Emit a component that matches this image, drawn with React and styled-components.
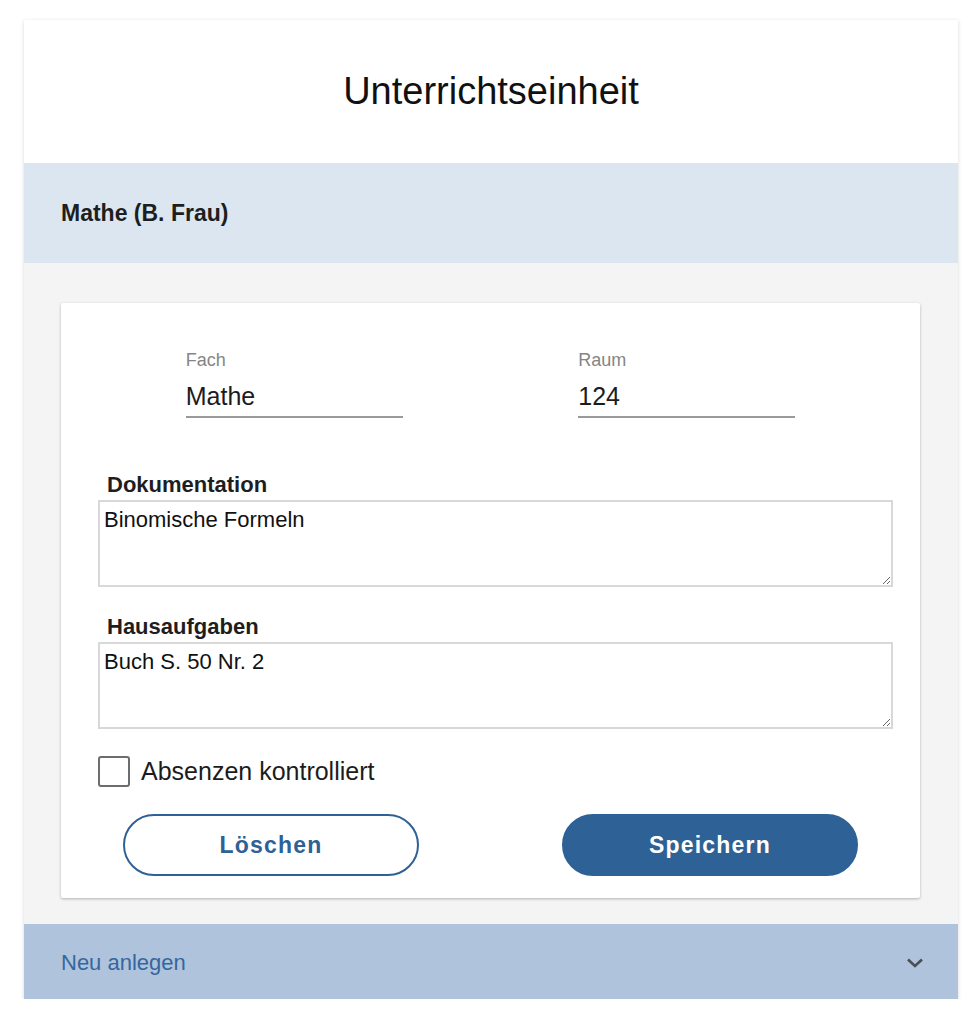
import React from "react";
import styled, { createGlobalStyle } from "styled-components";

const Global = createGlobalStyle`
  html, body { margin: 0; padding: 0; background: #ffffff; }
  body { font-family: "Liberation Sans", Arial, Helvetica, sans-serif; color: #1a1a1a; }
  * { box-sizing: border-box; }
`;

const Shell = styled.div`
  width: 934px;
  margin: 20px 0 0 24px;
  box-shadow: 0 1px 4px rgba(0, 0, 0, 0.16);
  background: #f4f4f4;
`;

const Header = styled.header`
  height: 143px;
  background: #ffffff;
  display: flex;
  align-items: center;
  justify-content: center;
  padding-bottom: 2px;
`;

const Title = styled.h1`
  margin: 0;
  font-size: 38px;
  line-height: 44px;
  font-weight: 400;
  color: #111;
`;

const Band = styled.div`
  height: 100px;
  background: #dbe6f0;
  display: flex;
  align-items: center;
  padding-left: 37px;
  font-size: 23px;
  font-weight: 700;
  color: #1e1e1e;
`;

const Body = styled.div`
  padding: 40px 38px 26px 37px;
`;

const Card = styled.section`
  background: #ffffff;
  border-radius: 2px;
  box-shadow: 0 1px 3px rgba(0, 0, 0, 0.28);
  padding: 47px 28px 22px 37px;
`;

const FieldRow = styled.div`
  display: grid;
  grid-template-columns: 1fr 1fr;
  width: 785px;
  justify-items: center;
`;

const Field = styled.div`
  width: 217px;
  display: flex;
  flex-direction: column;
`;

const FieldLabel = styled.span`
  font-size: 18px;
  line-height: 20px;
  color: #858585;
`;

const FieldValue = styled.div`
  margin-top: 12px;
  font-size: 25px;
  line-height: 28px;
  color: #1c1c1c;
  padding-bottom: 6px;
  border-bottom: 2px solid #9a9a9a;
`;

const AreaLabel = styled.label`
  display: block;
  margin: ${(p) => p.$top}px 0 4px 9px;
  font-size: 22px;
  line-height: 22px;
  font-weight: 700;
  color: #1e1e1e;
`;

const Area = styled.textarea`
  display: block;
  width: 795px;
  height: 87px;
  border: 2px solid #d8d8d8;
  border-radius: 0;
  padding: 5px 4px;
  font-family: "Liberation Sans", Arial, sans-serif;
  font-size: 22px;
  line-height: 26px;
  color: #111;
  background: #fff;
  outline: none;
`;

const CheckRow = styled.label`
  display: flex;
  align-items: center;
  gap: 11px;
  margin-top: 27px;
  font-size: 25px;
  line-height: 31px;
  color: #1c1c1c;
`;

const Box = styled.span`
  width: 32px;
  height: 31px;
  border: 2.5px solid #6d6d6d;
  border-radius: 3px;
  background: #fff;
`;

const Buttons = styled.div`
  display: flex;
  justify-content: center;
  gap: 143px;
  margin: 27px 0 0 -9px;
`;

const Button = styled.button`
  width: 296px;
  height: 62px;
  border-radius: 31px;
  border: 2px solid #2e6195;
  background: ${(p) => (p.$primary ? "#2e6195" : "#ffffff")};
  color: ${(p) => (p.$primary ? "#ffffff" : "#2e6195")};
  font-family: "Liberation Sans", Arial, sans-serif;
  font-size: 23px;
  font-weight: 700;
  letter-spacing: 1.2px;
  cursor: pointer;
`;

const Footer = styled.div`
  height: 75px;
  background: #afc3dc;
  display: flex;
  align-items: center;
  justify-content: space-between;
  padding: 2px 34px 0 37px;
  font-size: 22px;
  color: #35679e;
`;

const Chevron = () => (
  <svg width="18" height="12" viewBox="0 0 18 12">
    <path d="M2 2.5 L9 9 L16 2.5" fill="none" stroke="#4a4f57" strokeWidth="2.6" />
  </svg>
);

export default function App() {
  return (
    <>
      <Global />
      <Shell>
        <Header>
          <Title>Unterrichtseinheit</Title>
        </Header>
        <Band>Mathe (B. Frau)</Band>
        <Body>
          <Card>
            <FieldRow>
              <Field>
                <FieldLabel>Fach</FieldLabel>
                <FieldValue>Mathe</FieldValue>
              </Field>
              <Field>
                <FieldLabel>Raum</FieldLabel>
                <FieldValue>124</FieldValue>
              </Field>
            </FieldRow>
            <AreaLabel $top={56}>Dokumentation</AreaLabel>
            <Area defaultValue="Binomische Formeln" />
            <AreaLabel $top={29}>Hausaufgaben</AreaLabel>
            <Area defaultValue="Buch S. 50 Nr. 2" />
            <CheckRow>
              <Box />
              Absenzen kontrolliert
            </CheckRow>
            <Buttons>
              <Button>Löschen</Button>
              <Button $primary>Speichern</Button>
            </Buttons>
          </Card>
        </Body>
        <Footer>
          <span>Neu anlegen</span>
          <Chevron />
        </Footer>
      </Shell>
    </>
  );
}
